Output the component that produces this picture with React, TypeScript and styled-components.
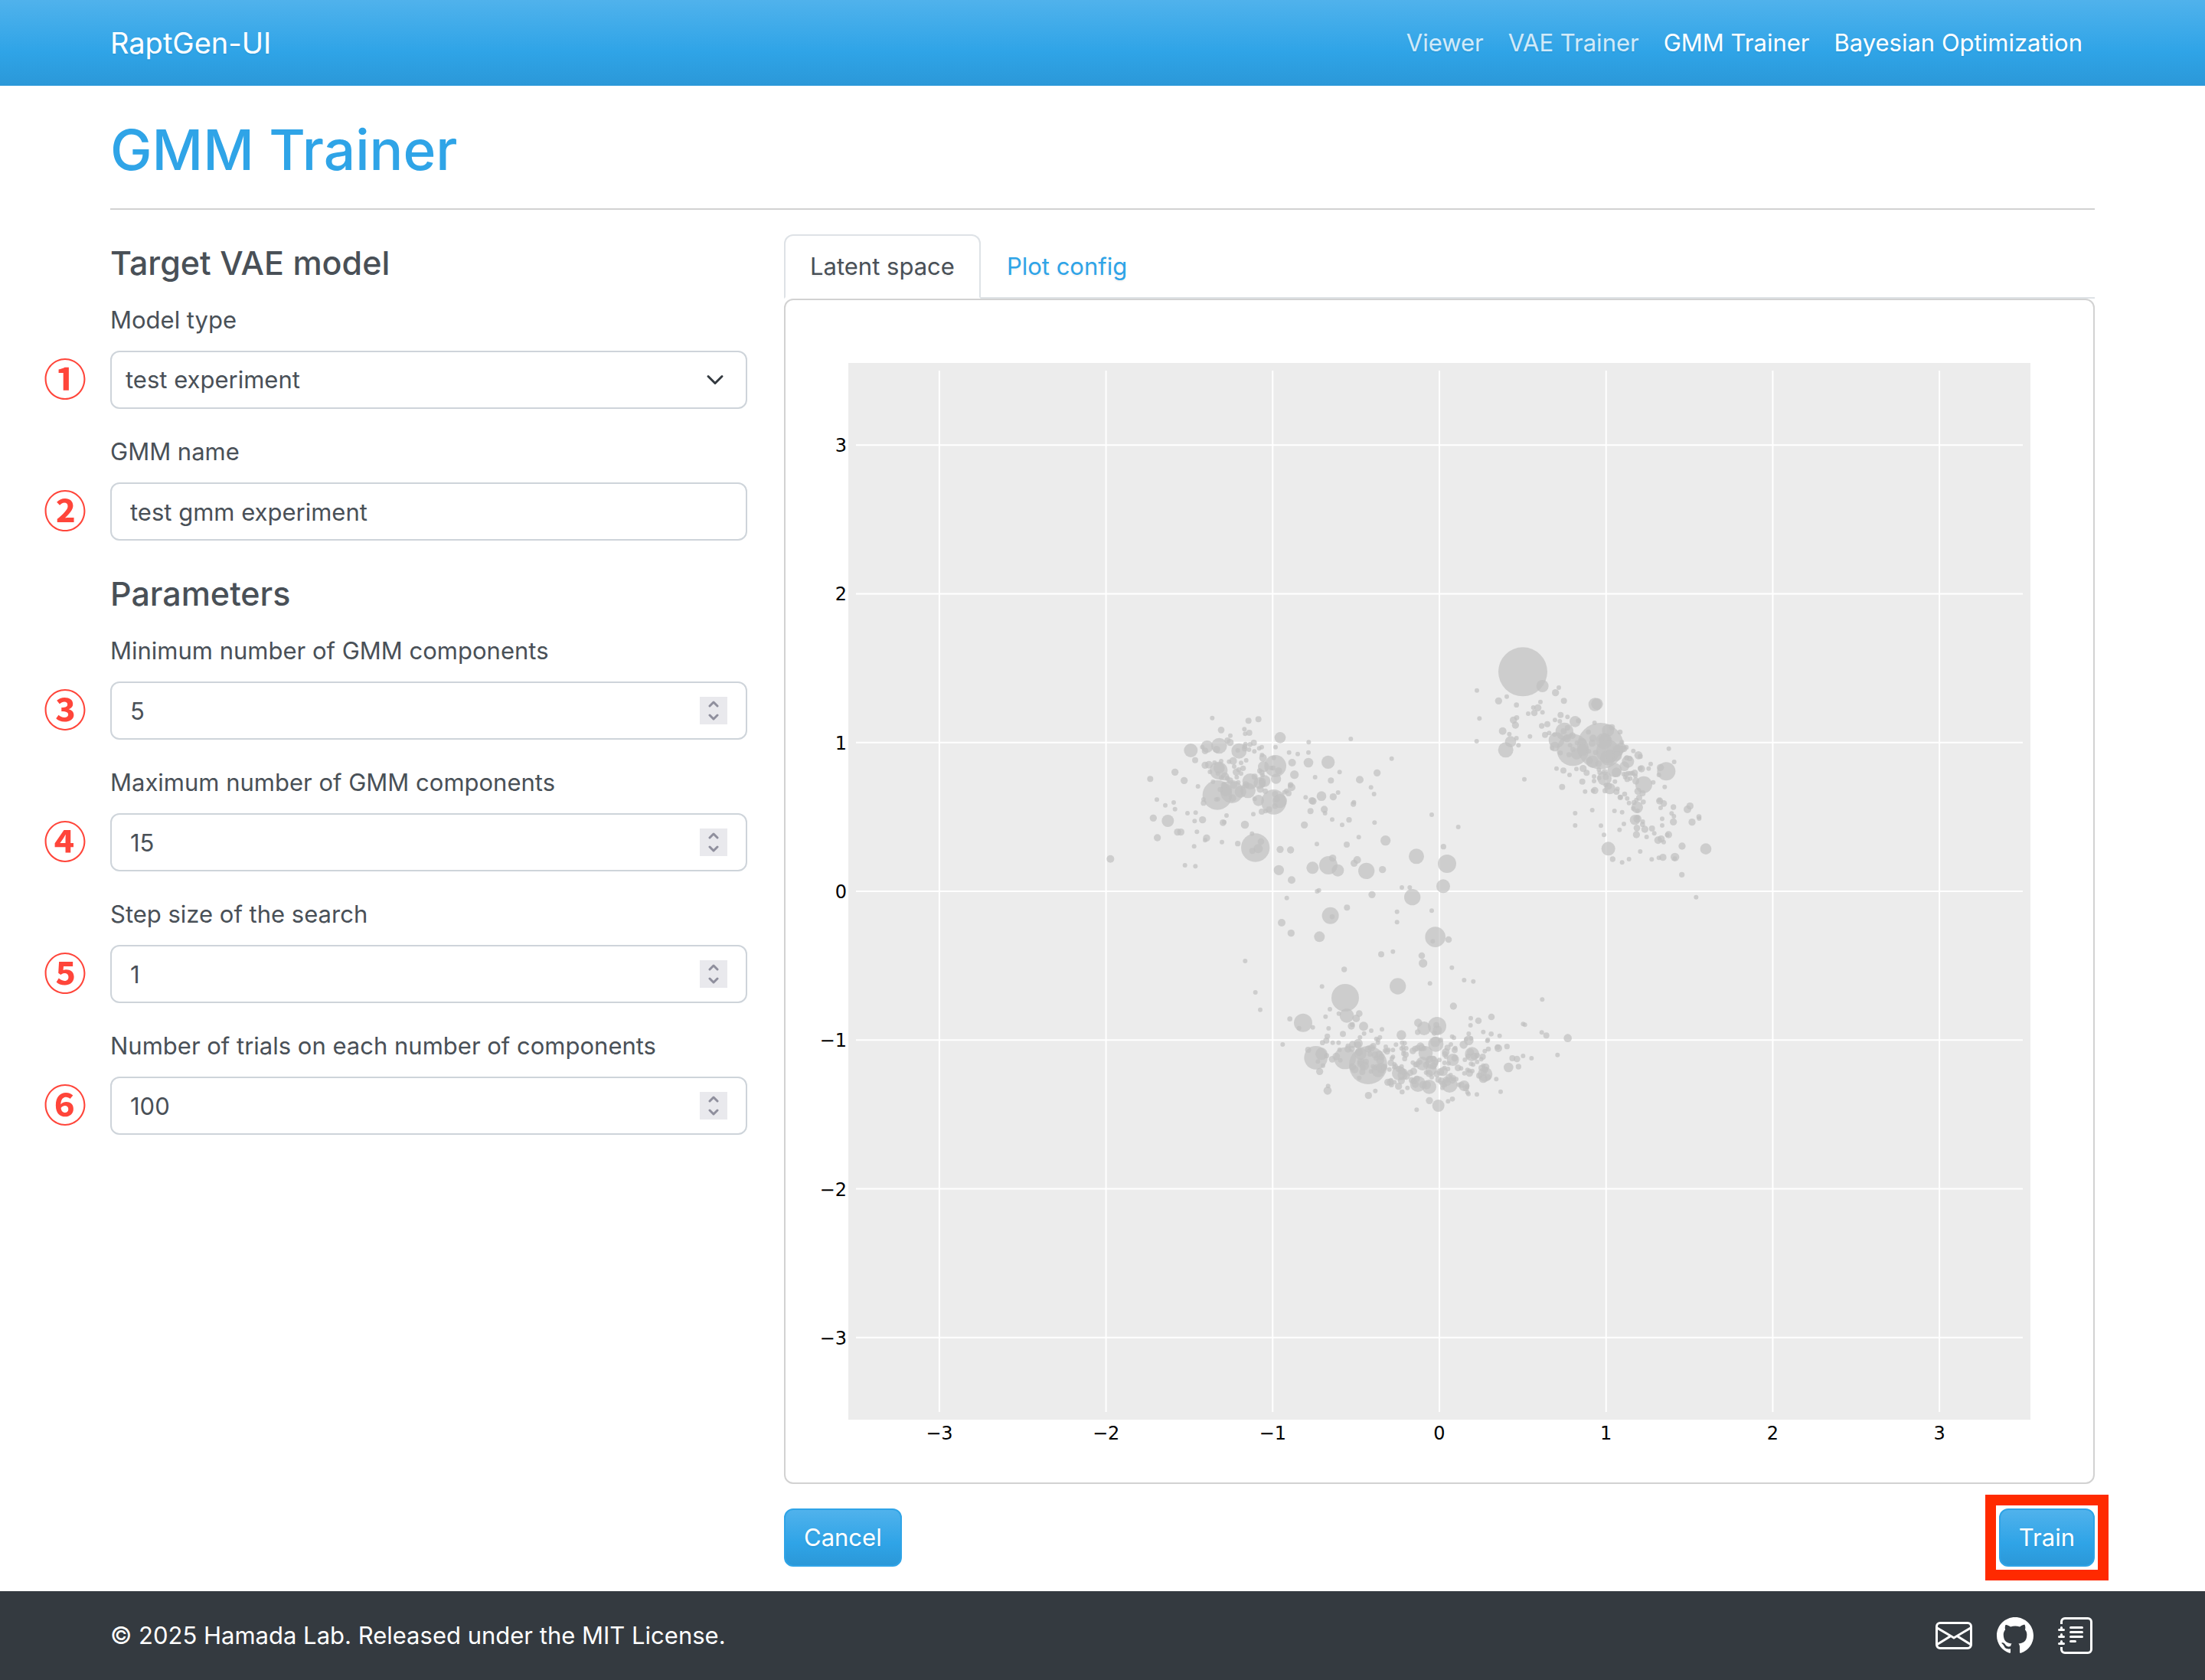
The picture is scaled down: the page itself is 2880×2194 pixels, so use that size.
import React, { useId, useState } from "react";
import styled, { createGlobalStyle, css } from "styled-components";
import { BsEnvelope, BsGithub, BsJournalText } from "react-icons/bs";

const color = {
  primary: "#2fa4e7",
  text: "#495057",
  border: "#ced4da",
  tabBorder: "#dee2e6",
  cardBorder: "#d2d2d2",
  footer: "#343a40",
  marker: "#ff453a",
  highlight: "#ff2a00",
};

const gradient = "linear-gradient(180deg, #50b2ec, #2fa4e7 60%, #2b98d8)";
const textShadow = "0 2px 2px rgba(0, 0, 0, 0.05)";

const GlobalStyle = createGlobalStyle`
  *, *::before, *::after { box-sizing: border-box; }
  body {
    margin: 0;
    background: #fff;
    color: ${color.text};
    font-family: Inter, "Liberation Sans", sans-serif;
    font-size: 31px;
    line-height: 48px;
  }
  button, input, select { font: inherit; color: inherit; }
`;

const Container = styled.div`
  width: 100%;
  max-width: 2640px;
  margin: 0 auto;
  padding: 0 24px;
`;

const Page = styled.div`
  display: flex;
  flex-direction: column;
  min-height: 100vh;
`;

const Header = styled.header`
  background: ${gradient};
  padding: 16px 0;
`;

const HeaderRow = styled(Container)`
  display: flex;
  align-items: center;
  justify-content: space-between;
  min-height: 80px;
`;

const Brand = styled.a`
  color: #fff;
  font-size: 38px;
  text-decoration: none;
  text-shadow: ${textShadow};
`;

const Nav = styled.nav`
  display: flex;
`;

const NavLink = styled.a<{ $muted?: boolean }>`
  padding: 16px;
  color: ${(p) => (p.$muted ? "rgba(255, 255, 255, 0.8)" : "#fff")};
  text-decoration: none;
  text-shadow: ${textShadow};
`;

const Main = styled(Container)`
  flex: 1;
  padding-top: 36px;
  padding-bottom: 32px;
`;

const Title = styled.h1`
  margin: 0;
  color: ${color.primary};
  font-size: 73px;
  font-weight: 500;
  line-height: 96px;
`;

const Rule = styled.hr`
  margin: 28px 0 32px;
  border: 0;
  border-top: 2px solid ${color.cardBorder};
`;

const Columns = styled.div`
  display: grid;
  grid-template-columns: minmax(0, 1fr) minmax(0, 2fr);
  margin: 0 -24px;
`;

const Form = styled.form`
  display: flex;
  flex-direction: column;
  gap: 32px;
  padding: 0 24px;
`;

const Results = styled.section`
  padding: 0 24px;
`;

const Group = styled.section`
  display: flex;
  flex-direction: column;
  gap: 32px;
  padding-top: 8px;
`;

const GroupTitle = styled.h3`
  margin: 0 0 -10px;
  font-size: 43px;
  font-weight: 500;
  line-height: 58px;
`;

const FieldBox = styled.div`
  display: flex;
  flex-direction: column;
  gap: 16px;
`;

const ControlBox = styled.div`
  position: relative;
  display: flex;
`;

const Marker = styled.span`
  position: absolute;
  top: -4px;
  left: -87px;
  color: ${color.marker};
  font-family: "Noto Sans CJK JP", sans-serif;
  font-size: 56px;
  font-weight: 700;
  line-height: 76px;
`;

const control = css`
  flex: 1;
  min-width: 0;
  height: 76px;
  border: 2px solid ${color.border};
  border-radius: 12px;
  background: #fff;
  appearance: none;
`;

const TextInput = styled.input`
  ${control}
  padding: 12px 24px;
  appearance: textfield;
  &::-webkit-inner-spin-button,
  &::-webkit-outer-spin-button {
    appearance: none;
    margin: 0;
  }
`;

const Select = styled.select`
  ${control}
  padding: 12px 72px 12px 18px;
`;

const SelectArrow = styled.svg`
  position: absolute;
  top: 26px;
  right: 30px;
  width: 24px;
  height: 24px;
  pointer-events: none;
`;

const Spinner = styled.span`
  position: absolute;
  top: 20px;
  right: 26px;
  display: flex;
  flex-direction: column;
  width: 36px;
  background: #e9e9ed;
`;

const StepButton = styled.button`
  display: flex;
  align-items: center;
  justify-content: center;
  height: 18px;
  padding: 0;
  border: 0;
  background: none;
  color: #8f8f9d;
`;

const Tabs = styled.div`
  display: flex;
  border-bottom: 2px solid ${color.tabBorder};
`;

const Tab = styled.button<{ $active?: boolean }>`
  margin-bottom: -2px;
  padding: 16px 32px;
  border: 2px solid transparent;
  border-radius: 12px 12px 0 0;
  background: transparent;
  color: ${color.primary};
  text-shadow: ${textShadow};
  ${(p) =>
    p.$active &&
    css`
      border-color: ${color.tabBorder} ${color.tabBorder} #fff;
      background: #fff;
      color: ${color.text};
    `}
`;

const Card = styled.div`
  display: flex;
  border: 2px solid ${color.cardBorder};
  border-radius: 12px;
`;

const Chart = styled.svg`
  display: block;
  width: 100%;
  height: auto;
  font-family: Verdana, "DejaVu Sans", sans-serif;
  font-size: 24px;
`;

const Actions = styled.div`
  display: flex;
  justify-content: space-between;
  margin-top: 32px;
`;

const Button = styled.button<{ $highlighted?: boolean }>`
  position: relative;
  height: 76px;
  padding: 0 24px;
  border: 2px solid ${color.primary};
  border-radius: 12px;
  background: ${gradient};
  color: #fff;
  text-shadow: ${textShadow};
  ${(p) =>
    p.$highlighted &&
    css`
      &::after {
        content: "";
        position: absolute;
        inset: -20px;
        border: 14px solid ${color.highlight};
        pointer-events: none;
      }
    `}
`;

const Footer = styled.footer`
  background: ${color.footer};
  color: #fff;
`;

const FooterRow = styled(Container)`
  display: flex;
  align-items: center;
  justify-content: space-between;
  min-height: 116px;
`;

const IconLinks = styled.div`
  display: flex;
  gap: 32px;
`;

const IconLink = styled.a`
  display: flex;
  color: #fff;
  font-size: 48px;
`;

/* Sampled sequences: x, y, radius triples in thirds of a chart unit, relative to each cluster's origin. */
const clusters: { x: number; y: number; points: string }[] = [
  {
    x: 414,
    y: 508,
    points: `430 113 9,572 124 12,611 118 12,465 160 13,556 157 9,559 175 9,575 171 12,501 182 9,490 201 12,500 209 14,
    696 190 22,808 208 9,973 195 9,678 227 9,346 240 27,410 225 24,391 227 9,402 242 13,457 222 31,447 236 14,535 242 30,530 240 9,
    593 210 12,578 217 10,560 215 9,558 224 10,557 233 11,574 237 9,595 244 9,614 232 9,624 227 9,731 248 9,765 254 9,807 248 9,
    363 278 12,402 298 14,417 296 15,439 288 9,465 282 9,455 319 35,457 309 22,452 331 9,421 324 9,496 284 9,512 281 15,516 303 9,
    563 279 9,543 289 9,551 310 11,534 316 10,524 325 14,543 331 9,526 345 9,625 258 9,629 269 15,631 304 22,677 301 43,671 269 9,
    668 309 10,661 309 9,690 320 14,743 288 15,807 288 19,884 286 26,1133 272 9,1076 328 14,929 325 9,752 335 17,833 345 9,895 358 12,
    1008 355 15,284 325 14,187 352 12,320 358 14,374 381 9,433 363 9,680 351 20,616 320 10,624 327 11,627 337 9,
    450 415 58,507 402 45,484 396 24,541 402 23,570 397 30,579 361 31,596 343 12,562 375 14,514 376 14,480 342 16,466 347 10,490 350 10,
    500 358 12,476 371 9,475 377 11,532 365 9,461 393 10,509 427 15,452 431 9,446 432 9,396 432 9,396 446 11,615 368 23,635 360 23,
    627 360 13,626 371 14,618 392 14,638 400 11,611 436 22,596 430 9,671 442 49,695 438 28,676 411 12,676 458 11,683 430 13,653 471 12,
    624 480 12,639 478 9,591 490 9,737 375 11,741 385 15,721 399 10,729 408 12,713 404 9,736 377 9,796 424 9,858 419 19,904 422 14,
    923 405 9,821 437 14,825 439 14,815 478 12,869 471 14,872 486 9,983 450 11,985 443 9,1052 385 9,1064 411 9,1066 523 9,900 511 9,
    966 512 11,939 532 9,791 532 14,1004 580 9,957 609 12,840 607 9,1109 593 20,1290 492 9,213 433 9,246 455 9,279 444 9,284 470 9,
    333 486 9,365 484 9,361 517 9,392 512 14,199 505 14,256 516 24,294 560 14,307 560 14,215 582 14,370 559 9,408 583 14,402 592 9,
    359 616 9,468 599 9,486 495 9,472 523 13,477 521 9,558 531 16,586 566 9,530 605 11,599 621 56,621 597 13,610 625 18,587 634 12,
    323 690 9,364 694 9,31 665 15,696 628 14,737 630 14,691 709 20,741 748 15,823 700 24,885 690 36,902 662 14,922 710 24,
    998 669 15,986 682 14,1034 712 32,1097 707 14,1230 655 30,1173 777 9,1204 777 9,1214 815 32,1056 805 14,848 788 9,841 792 9,
    722 818 9,702 915 15,739 956 14,893 887 33,900 892 10,958 856 12,1154 872 9,1154 913 9,1290 868 9`,
  },
  {
    x: 854,
    y: 428,
    points: `327 172 96,404 228 24,468 234 9,455 254 14,147 245 9,264 269 9,232 286 14,302 302 10,396 290 9,488 286 12,368 312 9,
    386 313 14,372 333 13,404 331 9,348 336 9,157 355 9,475 341 12,502 349 9,453 361 9,472 366 9,610 300 26,618 298 23,
    290 361 14,303 352 10,298 381 14,401 384 11,423 377 12,532 367 22,545 364 10,248 404 15,274 416 9,302 432 9,279 446 22,260 478 30,
    310 460 9,355 425 9,414 419 12,430 412 9,146 444 9,608 372 9,490 406 35,487 405 12,502 391 11,451 418 9,459 440 31,452 465 19,442 471 9,
    500 432 16,521 422 13,474 490 10,523 478 63,512 460 9,508 497 10,540 450 10,538 494 22,523 476 10,631 463 91,661 402 24,676 389 12,
    584 408 10,602 432 14,599 452 14,560 448 16,562 478 23,645 444 32,648 440 24,660 484 46,660 508 30,668 498 20,600 524 24,588 520 14,
    624 532 13,612 488 10,586 484 9,708 408 10,715 448 9,712 470 20,700 480 22,696 502 19,732 468 10,724 474 12,760 482 9,780 499 16,787 504 10,
    739 524 24,734 509 10,746 512 10,725 542 19,828 533 9,820 551 9,792 552 14,787 550 10,899 473 9,920 525 9,889 562 36,866 547 14,
    860 576 9,687 557 28,694 566 19,647 590 28,648 565 12,652 584 12,626 588 9,625 555 9,628 567 9,688 602 9,765 568 13,768 580 9,722 573 9,
    732 574 11,740 570 10,750 570 10,757 569 9,736 593 11,748 590 9,728 585 9,770 600 14,801 614 33,838 605 9,883 623 9,563 551 14,577 568 12,
    537 553 9,459 551 9,486 559 12,510 576 9,606 582 9,606 600 9,560 602 12,481 623 12,609 637 14,602 638 9,571 641 9,333 593 9,
    668 630 22,662 620 14,652 616 9,649 638 10,694 642 12,698 631 9,709 664 11,726 651 10,736 668 9,743 686 9,778 640 14,796 648 12,783 665 12,
    772 674 9,763 684 10,799 682 10,775 703 23,760 708 9,776 716 9,709 663 9,863 678 14,879 688 13,867 705 9,862 676 9,686 717 9,716 722 9,
    599 714 9,532 726 9,532 774 9,633 775 9,645 811 9,766 752 20,776 748 16,777 742 9,797 759 9,796 770 10,774 784 13,805 789 14,833 786 12,
    842 805 9,772 810 14,812 819 9,723 768 9,706 791 9,873 748 9,873 774 9,917 702 11,910 727 9,919 738 9,917 760 14,982 698 14,972 711 15,
    990 761 14,1017 740 10,1018 747 9,898 810 14,893 811 9,869 827 14,857 832 15,879 839 9,951 855 14,1044 866 22,787 876 9,662 865 27,
    679 906 11,716 919 9,743 906 9,832 907 9,860 901 9,876 899 14,923 898 17,922 904 9,950 967 11,1006 1055 9,74 780 9,16 857 11,30 924 36,15 1012 27`,
  },
  {
    x: 554,
    y: 828,
    points: `430 10 21,884 11 40,874 28 9,936 21 13,139 105 9,672 79 12,718 68 9,831 84 13,836 114 17,527 138 11,949 131 9,
    440 205 9,863 193 9,997 180 9,1033 185 9,737 204 32,179 228 9,198 296 9,531 249 54,537 319 28,471 294 9,506 311 9,586 311 13,574 330 15,
    454 323 9,314 332 10,366 347 36,350 368 9,404 365 9,466 369 9,559 354 10,555 360 14,603 361 18,633 378 9,675 373 9,605 389 9,
    955 282 14,1303 256 9,1023 329 9,1053 339 13,1104 324 13,1022 357 9,1072 383 9,1103 391 10,1136 398 9,1228 352 9,1235 355 9,1301 385 9,
    1319 397 12,1403 407 16,817 347 16,840 369 27,815 384 11,891 360 36,888 356 12,892 376 18,880 388 10,751 395 19,522 391 12,589 404 9,
    461 400 11,457 417 12,442 425 10,482 425 9,505 425 9,286 432 9,509 453 9,582 428 18,560 432 14,542 438 10,542 450 14,557 449 12,580 434 14,
    653 410 9,660 414 9,667 404 9,659 425 9,641 438 12,730 433 9,754 425 9,764 427 9,886 431 30,884 422 20,905 415 10,950 401 9,957 406 9,
    1015 390 9,1015 416 19,1024 408 9,1005 412 9,995 433 16,1090 414 9,1088 418 9,1092 450 10,1078 458 9,1131 447 15,1128 442 11,1165 440 11,
    386 453 12,416 484 46,438 469 24,458 476 10,424 499 9,444 515 9,431 538 14,480 490 13,496 479 15,512 494 9,530 486 43,621 513 75,
    591 468 24,585 462 15,622 450 14,634 446 14,648 473 14,664 470 14,672 482 13,668 494 16,628 470 10,652 486 10,592 500 14,606 516 18,
    592 508 14,600 522 12,560 520 14,568 530 15,598 540 12,586 563 9,640 518 9,648 524 10,632 538 9,660 534 26,672 524 20,684 520 12,612 500 12,
    690 441 9,687 456 9,695 460 12,700 453 9,718 454 9,718 481 9,714 487 9,710 504 13,704 530 9,724 510 9,728 518 10,723 522 9,752 448 9,
    758 442 9,760 456 9,770 447 9,760 468 10,768 472 12,764 488 10,796 457 13,805 449 12,814 446 12,826 440 16,830 445 14,846 466 28,
    840 448 10,945 432 9,932 445 12,925 462 15,922 470 12,960 454 12,962 446 9,1028 470 28,1022 462 14,1036 478 14,1012 478 10,1048 475 11,
    1070 480 12,1064 490 9,1048 500 9,1000 492 9,1024 508 9,1032 511 9,953 492 24,960 486 13,926 480 9,936 506 9,920 504 9,900 493 9,
    870 502 26,862 490 14,876 488 12,834 507 27,824 502 10,812 510 12,806 512 10,796 503 9,848 512 12,876 516 14,868 532 22,884 502 12,
    973 524 13,985 526 9,1017 535 9,1018 545 14,1010 532 9,998 545 9,1029 536 9,1079 549 29,1082 520 14,1072 515 9,1065 524 12,1072 566 17,
    1056 554 12,1090 560 12,1074 542 12,1080 530 12,1123 568 9,1171 522 19,1210 519 11,1186 486 12,1204 489 13,1228 477 9,1261 486 9,1363 473 9,
    742 545 28,752 518 9,740 528 12,750 534 14,762 540 13,756 552 20,770 556 15,751 574 14,786 543 13,799 537 14,740 596 14,754 618 10,775 602 9,
    698 580 14,708 580 14,712 590 10,724 580 9,710 572 9,816 587 31,812 566 12,800 576 12,792 572 12,806 588 14,860 598 28,850 591 17,836 590 15,
    848 542 9,860 546 14,870 560 9,890 548 13,904 540 15,915 538 18,934 528 9,944 552 9,936 560 12,920 524 9,896 570 12,908 576 14,914 586 13,
    912 602 9,922 592 9,940 590 31,932 580 14,926 570 12,950 572 14,966 568 9,954 564 12,997 594 21,986 590 12,976 590 9,1008 596 10,1004 604 12,
    1010 620 9,1014 626 9,1047 628 9,1140 617 9,951 646 10,934 655 9,861 652 14,896 672 24,811 688 9,462 613 16,464 595 9,649 614 9,622 632 14`,
  },
];

const ticks = [-3, -2, -1, 0, 1, 2, 3];
const area = { left: 92, top: 92, width: 1524, height: 1360 };
const scaleX = (v: number) => area.left + ((v + 3.5) / 7) * area.width;
const scaleY = (v: number) => area.top + ((3.5 - v) / 7) * area.height;
const tickLabel = (v: number) => (v < 0 ? `\u2212${-v}` : `${v}`);

function LatentSpacePlot() {
  return (
    <Chart viewBox="0 0 1708 1544" role="img" aria-label="Latent space">
      <rect x={82} y={82} width={1544} height={1380} fill="#ececec" />
      <g stroke="#fff" strokeWidth={2}>
        {ticks.map((t) => (
          <line key={`x${t}`} x1={scaleX(t)} x2={scaleX(t)} y1={area.top} y2={area.top + area.height} />
        ))}
        {ticks.map((t) => (
          <line key={`y${t}`} y1={scaleY(t)} y2={scaleY(t)} x1={area.left} x2={area.left + area.width} />
        ))}
      </g>
      {clusters.map((c) => (
        <g key={c.x} transform={`translate(${c.x} ${c.y})`} fill="#c0c0c0" fillOpacity={0.7}>
          {c.points.split(",").map((p, i) => {
            const [x, y, r] = p.trim().split(" ").map(Number);
            return <circle key={i} cx={x / 3} cy={y / 3} r={r / 3} />;
          })}
        </g>
      ))}
      <g fill="#000">
        {ticks.map((t) => (
          <text key={`x${t}`} x={scaleX(t)} y={1488} textAnchor="middle">
            {tickLabel(t)}
          </text>
        ))}
        {ticks.map((t) => (
          <text key={`y${t}`} x={80} y={scaleY(t) + 9} textAnchor="end">
            {tickLabel(t)}
          </text>
        ))}
      </g>
    </Chart>
  );
}

function Chevron({ up }: { up?: boolean }) {
  return (
    <svg width="16" height="10" viewBox="0 0 16 10" fill="none" stroke="currentColor" strokeWidth="3" strokeLinecap="round" strokeLinejoin="round">
      <path d={up ? "M3 8l5-5 5 5" : "M3 2l5 5 5-5"} />
    </svg>
  );
}

function Field({ label, marker, children }: { label: string; marker: string; children: (id: string) => React.ReactNode }) {
  const id = useId();
  return (
    <FieldBox>
      <label htmlFor={id}>{label}</label>
      <ControlBox>
        <Marker>{marker}</Marker>
        {children(id)}
      </ControlBox>
    </FieldBox>
  );
}

function NumberField({ label, marker, initial }: { label: string; marker: string; initial: number }) {
  const [value, setValue] = useState(initial);
  return (
    <Field label={label} marker={marker}>
      {(id) => (
        <>
          <TextInput id={id} type="number" value={value} onChange={(e) => setValue(Number(e.target.value))} />
          <Spinner>
            <StepButton type="button" aria-label="Increase" onClick={() => setValue(value + 1)}>
              <Chevron up />
            </StepButton>
            <StepButton type="button" aria-label="Decrease" onClick={() => setValue(value - 1)}>
              <Chevron />
            </StepButton>
          </Spinner>
        </>
      )}
    </Field>
  );
}

export default function App() {
  return (
    <Page>
      <GlobalStyle />
      <Header>
        <HeaderRow>
          <Brand href="#">RaptGen-UI</Brand>
          <Nav>
            <NavLink href="#viewer" $muted>Viewer</NavLink>
            <NavLink href="#vae" $muted>VAE Trainer</NavLink>
            <NavLink href="#gmm">GMM Trainer</NavLink>
            <NavLink href="#bo">Bayesian Optimization</NavLink>
          </Nav>
        </HeaderRow>
      </Header>
      <Main as="main">
        <Title>GMM Trainer</Title>
        <Rule />
        <Columns>
          <Form>
            <Group>
              <GroupTitle>Target VAE model</GroupTitle>
              <Field label="Model type" marker="①">
                {(id) => (
                  <>
                    <Select id={id}>
                      <option>test experiment</option>
                    </Select>
                    <SelectArrow viewBox="0 0 16 16" fill="none" stroke="#343a40" strokeWidth="2" strokeLinecap="round" strokeLinejoin="round">
                      <path d="m2 5 6 6 6-6" />
                    </SelectArrow>
                  </>
                )}
              </Field>
              <Field label="GMM name" marker="②">
                {(id) => <TextInput id={id} type="text" defaultValue="test gmm experiment" />}
              </Field>
            </Group>
            <Group>
              <GroupTitle>Parameters</GroupTitle>
              <NumberField label="Minimum number of GMM components" marker="③" initial={5} />
              <NumberField label="Maximum number of GMM components" marker="④" initial={15} />
              <NumberField label="Step size of the search" marker="⑤" initial={1} />
              <NumberField label="Number of trials on each number of components" marker="⑥" initial={100} />
            </Group>
          </Form>
          <Results>
            <Tabs role="tablist">
              <Tab type="button" role="tab" aria-selected="true" $active>Latent space</Tab>
              <Tab type="button" role="tab" aria-selected="false">Plot config</Tab>
            </Tabs>
            <Card>
              <LatentSpacePlot />
            </Card>
            <Actions>
              <Button type="button">Cancel</Button>
              <Button type="button" $highlighted>Train</Button>
            </Actions>
          </Results>
        </Columns>
      </Main>
      <Footer>
        <FooterRow>
          <span>© 2025 Hamada Lab. Released under the MIT License.</span>
          <IconLinks>
            <IconLink href="#mail" aria-label="Mail"><BsEnvelope /></IconLink>
            <IconLink href="#github" aria-label="GitHub"><BsGithub /></IconLink>
            <IconLink href="#docs" aria-label="Documentation"><BsJournalText /></IconLink>
          </IconLinks>
        </FooterRow>
      </Footer>
    </Page>
  );
}
